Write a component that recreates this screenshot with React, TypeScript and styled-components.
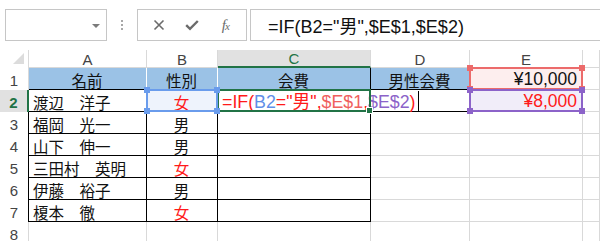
import React from "react"
import styled, { createGlobalStyle } from "styled-components"

const GlobalStyle = createGlobalStyle`
html, body {
  margin: 0;
  padding: 0;
  background: #ffffff;
  overflow: hidden;
  height: 241px;
}
`

const GREEN = "#217346"
const GRID = "#d9d9d9"
const BLACK = "#000000"
const LATIN = `"Liberation Sans", "Noto Sans CJK JP", sans-serif`
const CJK = `"Noto Sans CJK JP", "Liberation Sans", sans-serif`

const Page = styled.div`
width: 600px;
height: 241px;
overflow: hidden;
font-family: ${LATIN};
`

const Toolbar = styled.div`
display: flex;
align-items: center;
height: 50px;
padding-left: 5px;
box-sizing: border-box;
`

const NameBox = styled.div`
width: 102px;
height: 32px;
box-sizing: border-box;
border: 1px solid #c6c6c6;
display: flex;
align-items: center;
justify-content: flex-end;
padding-right: 6px;
`

const DropArrow = styled.span`
width: 0;
height: 0;
border-left: 4px solid transparent;
border-right: 4px solid transparent;
border-top: 4px solid #7b7b7b;
margin-top: 2px;
`

const Grip = styled.div`
width: 30px;
display: flex;
flex-direction: column;
align-items: center;
gap: 2px;
`

const GripDot = styled.span`
width: 2px;
height: 2px;
background: #a8a8a8;
`

const ButtonBox = styled.div`
width: 110px;
height: 32px;
box-sizing: border-box;
border: 1px solid #c6c6c6;
display: flex;
align-items: center;
justify-content: space-around;
padding: 0 4px;
`

const ToolButton = styled.span`
width: 24px;
display: flex;
justify-content: center;
align-items: center;
color: #6b6b6b;
`

const Fx = styled.span`
font-family: "Liberation Serif", serif;
font-style: italic;
font-size: 15px;
color: #6b6b6b;
letter-spacing: -1px;
& small {
  font-size: 11px;
}
`

const FormulaBar = styled.div`
flex: 1;
height: 32px;
margin-left: 3px;
box-sizing: border-box;
border: 1px solid #c6c6c6;
border-right: none;
display: flex;
align-items: center;
padding-left: 17px;
font-family: ${LATIN};
font-size: 18px;
color: #111;
white-space: nowrap;
`

const Sheet = styled.div`
display: grid;
grid-template-columns: 29px 118px 71px 153px 99px 113px 1fr;
grid-template-rows: 18px repeat(8, 22px);
`

const Corner = styled.div`
display: flex;
justify-content: flex-end;
align-items: flex-end;
padding: 0 4px 4px 0;
border-right: 1px solid ${GRID};
`

const Triangle = styled.span`
width: 0;
height: 0;
border-left: 11px solid transparent;
border-bottom: 11px solid #dcdcdc;
`

const ColHead = styled.div<{ $active?: boolean }>`
display: flex;
align-items: center;
justify-content: center;
box-sizing: border-box;
font-size: 15px;
color: ${(p) => (p.$active ? GREEN : "#444")};
background: ${(p) => (p.$active ? "#e1e1e1" : "#ffffff")};
border-right: 1px solid ${GRID};
border-bottom: ${(p) => (p.$active ? `2px solid ${GREEN}` : `1px solid ${GRID}`)};
padding-top: 1px;
`

const RowHead = styled.div<{ $active?: boolean; $edge: string }>`
display: flex;
align-items: center;
justify-content: center;
box-sizing: border-box;
font-size: 15px;
padding-top: 2px;
font-weight: ${(p) => (p.$active ? 700 : 400)};
color: ${(p) => (p.$active ? GREEN : "#444")};
background: ${(p) => (p.$active ? "#e1e1e1" : "#ffffff")};
border-right: ${(p) => (p.$active ? `2px solid ${GREEN}` : `1px solid ${p.$edge}`)};
`

type CellProps = {
  $fill?: string
  $align?: "left" | "center" | "right"
  $color?: string
  $right?: string
  $bottom?: string
  $num?: boolean
  $layer?: number
}

const Cell = styled.div<CellProps>`
position: ${(p) => (p.$layer ? "relative" : "static")};
z-index: ${(p) => p.$layer ?? "auto"};
display: flex;
align-items: center;
justify-content: ${(p) =>
  p.$align === "center" ? "center" : p.$align === "right" ? "flex-end" : "flex-start"};
box-sizing: border-box;
padding: 2px 5px 0 4px;
white-space: nowrap;
background: ${(p) => p.$fill ?? "transparent"};
color: ${(p) => p.$color ?? "#111"};
font-family: ${(p) => (p.$num ? LATIN : CJK)};
font-size: ${(p) => (p.$num ? "17.5px" : "15.5px")};
border-right: 1px solid ${(p) => p.$right ?? GRID};
border-bottom: 1px solid ${(p) => p.$bottom ?? GRID};
`

const FormulaText = styled.span`
flex-shrink: 0;
font-size: 17.8px;
margin-top: -3px;
`

const Selection = styled.div<{ $color: string }>`
position: absolute;
top: -1px;
left: -1px;
right: -1px;
bottom: -1px;
border: 2px solid ${(p) => p.$color};
pointer-events: none;
`

const Handle = styled.span<{ $color: string; $v: "top" | "bottom"; $h: "left" | "right" }>`
position: absolute;
width: 6px;
height: 6px;
background: ${(p) => p.$color};
${(p) => p.$v}: -4px;
${(p) => p.$h}: -4px;
`

const FillHandle = styled.span`
position: absolute;
width: 5px;
height: 5px;
background: ${GREEN};
border: 1px solid #ffffff;
right: -4px;
bottom: -4px;
`

const Caret = styled.span`
flex-shrink: 0;
display: inline-block;
width: 1px;
height: 20px;
background: #000;
margin: -2px 0 0 2px;
`

const Ref = styled.span<{ $c: string }>`
color: ${(p) => p.$c};
`

function Box({ color, handles = true }: { color: string; handles?: boolean }) {
  return (
    <Selection $color={color}>
      {handles && (
        <>
          <Handle $color={color} $v="top" $h="left" />
          <Handle $color={color} $v="top" $h="right" />
          <Handle $color={color} $v="bottom" $h="left" />
          <Handle $color={color} $v="bottom" $h="right" />
        </>
      )}
    </Selection>
  )
}

const BLUE_FILL = "#9bc2e6"
const B2_BLUE = "#6a9cec"
const E1_RED = "#ec6b6b"
const E2_PURPLE = "#8c63c9"
const RED = "#ff1a1a"

const people: [string, string][] = [
  ["福岡　光一", "男"],
  ["山下　伸一", "男"],
  ["三田村　英明", "女"],
  ["伊藤　裕子", "男"],
  ["榎本　徹", "女"],
]

function CrossIcon() {
  return (
    <svg width="12" height="12" viewBox="0 0 12 12">
      <path d="M1.5 1.5 L10.5 10.5 M10.5 1.5 L1.5 10.5" stroke="#6b6b6b" strokeWidth="1.6" fill="none" />
    </svg>
  )
}

function CheckIcon() {
  return (
    <svg width="14" height="12" viewBox="0 0 14 12">
      <path d="M1.2 6.2 L5 9.8 L12.8 2" stroke="#6b6b6b" strokeWidth="2.4" fill="none" />
    </svg>
  )
}

export default function App() {
  return (
    <Page>
      <GlobalStyle />
      <Toolbar>
        <NameBox>
          <DropArrow />
        </NameBox>
        <Grip>
          <GripDot />
          <GripDot />
          <GripDot />
        </Grip>
        <ButtonBox>
          <ToolButton><CrossIcon /></ToolButton>
          <ToolButton><CheckIcon /></ToolButton>
          <ToolButton><Fx>f<small>x</small></Fx></ToolButton>
        </ButtonBox>
        <FormulaBar>=IF(B2="男",$E$1,$E$2)</FormulaBar>
      </Toolbar>

      <Sheet>
        <Corner><Triangle /></Corner>
        {["A", "B", "C", "D", "E", ""].map((c) => (
          <ColHead key={c || "F"} $active={c === "C"}>{c}</ColHead>
        ))}

        {/* row 1 */}
        <RowHead $edge={GRID}>1</RowHead>
        <Cell $fill={BLUE_FILL} $align="center" $right="#ffffff" $bottom={BLACK}>名前</Cell>
        <Cell $fill={BLUE_FILL} $align="center" $right="#ffffff" $bottom={BLACK}>性別</Cell>
        <Cell $fill={BLUE_FILL} $align="center" $right={BLACK} $bottom={BLACK}>会費</Cell>
        <Cell $fill={BLUE_FILL} $align="center" $bottom={BLACK}>男性会費</Cell>
        <Cell $fill="#fdeeee" $align="right" $num $layer={2}>
          ¥10,000
          <Box color={E1_RED} />
        </Cell>
        <Cell />

        {/* row 2 */}
        <RowHead $active $edge={GREEN}>2</RowHead>
        <Cell $right={BLACK} $bottom={BLACK}>渡辺　洋子</Cell>
        <Cell $fill="#eef3fc" $align="center" $color={RED} $right={BLACK} $bottom={BLACK} $layer={4}>
          女
          <Box color={B2_BLUE} />
        </Cell>
        <Cell $num $color={RED} $right={BLACK} $bottom={BLACK} $layer={1}>
          <FormulaText>
            =IF(<Ref $c="#5f8fe8">B2</Ref>="男",<Ref $c="#f0605e">$E$1</Ref>,<Ref $c={E2_PURPLE}>$E$2</Ref>)
          </FormulaText>
          <Caret />
          <Selection $color={GREEN}>
            <FillHandle />
          </Selection>
        </Cell>
        <Cell $bottom={BLACK} />
        <Cell $fill="#f1edf9" $align="right" $num $color={RED} $layer={3}>
          ¥8,000
          <Box color={E2_PURPLE} />
        </Cell>
        <Cell />

        {/* rows 3-7 */}
        {people.map(([name, sex], i) => (
          <React.Fragment key={name}>
            <RowHead $edge={BLACK}>{i + 3}</RowHead>
            <Cell $right={BLACK} $bottom={BLACK}>{name}</Cell>
            <Cell $align="center" $color={sex === "女" ? RED : "#111"} $right={BLACK} $bottom={BLACK}>{sex}</Cell>
            <Cell $right={BLACK} $bottom={BLACK} />
            <Cell />
            <Cell />
            <Cell />
          </React.Fragment>
        ))}

        {/* row 8 */}
        <RowHead $edge={GRID}>8</RowHead>
        <Cell />
        <Cell />
        <Cell />
        <Cell />
        <Cell />
        <Cell />
      </Sheet>
    </Page>
  )
}
